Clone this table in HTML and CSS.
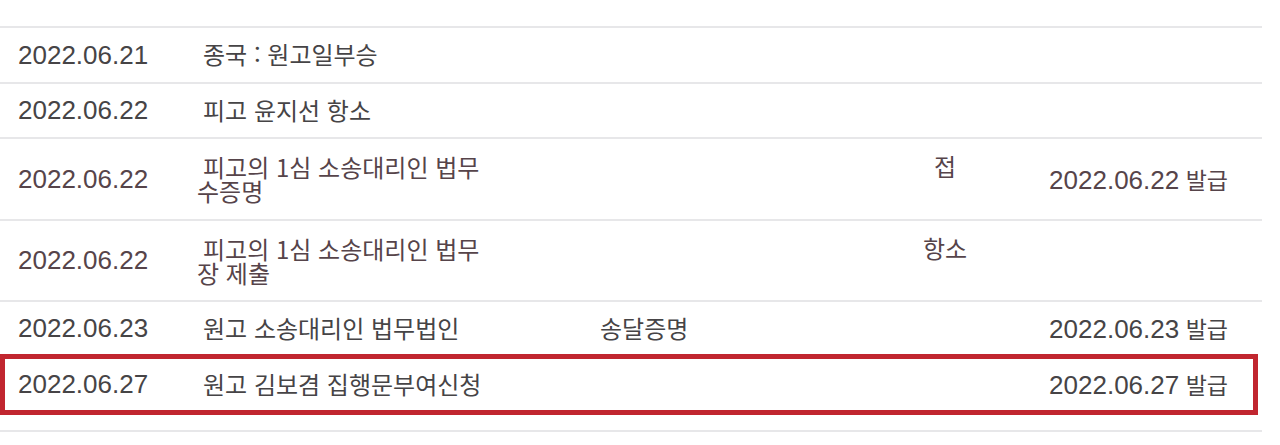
FILE: index.html
```html
<!DOCTYPE html>
<html lang="ko">
<head>
<meta charset="utf-8">
<title>사건진행내역</title>
<link rel="stylesheet" href="styles.css">
</head>
<body>
<div class="list">
  <div class="row h56">
    <div class="date">2022.06.21</div>
    <div class="text">종국 : 원고일부승</div>
  </div>
  <div class="row h55">
    <div class="date">2022.06.22</div>
    <div class="text">피고 윤지선 항소</div>
  </div>
  <div class="row h82 tint">
    <div class="date">2022.06.22</div>
    <div class="text wrap">피고의 1심 소송대리인 법무<br>수증명</div>
    <div class="c4 top">접</div>
    <div class="c5"><span class="num">2022.06.22</span> 발급</div>
  </div>
  <div class="row h81 tint">
    <div class="date">2022.06.22</div>
    <div class="text wrap">피고의 1심 소송대리인 법무<br>장 제출</div>
    <div class="c4 top">항소</div>
  </div>
  <div class="row h55">
    <div class="date">2022.06.23</div>
    <div class="text">원고 소송대리인 법무법인</div>
    <div class="c3">송달증명</div>
    <div class="c5"><span class="num">2022.06.23</span> 발급</div>
  </div>
  <div class="row hl">
    <div class="date">2022.06.27</div>
    <div class="text">원고 김보겸 집행문부여신청</div>
    <div class="c5"><span class="num">2022.06.27</span> 발급</div>
  </div>
  <div class="spacer"></div>
  <div class="row last"></div>
</div>
</body>
</html>
```

FILE: styles.css
```css
html, body {
  margin: 0;
  padding: 0;
  background: #ffffff;
}

body {
  font-family: "Liberation Sans", "Noto Sans CJK KR", sans-serif;
  color: #464446;
}

.list {
  width: 1262px;
  padding-top: 26px;
}

.row {
  display: grid;
  grid-template-columns: 197px 403px 300px 90px 1fr;
  align-items: center;
  border-top: 2px solid #e7e7e9;
  box-sizing: border-box;
}

.h56 { height: 56px; }
.h55 { height: 55px; }
.h82 { height: 82px; }
.h81 { height: 81px; }

.tint { color: #56444a; }

.date {
  grid-column: 1;
  padding-left: 18px;
  font-size: 26px;
}

.text {
  grid-column: 2;
  font-family: "Noto Sans CJK KR", "Liberation Sans", sans-serif;
  font-size: 24px;
  line-height: 24px;
  text-indent: 6px;
  padding-bottom: 2px;
}

.text.wrap {
  line-height: 24px;
  padding-bottom: 0;
}

.c3 {
  grid-column: 3;
  font-family: "Noto Sans CJK KR", sans-serif;
  font-size: 24px;
  line-height: 24px;
  padding-bottom: 2px;
}

.c4 {
  grid-column: 4;
  text-align: center;
  font-family: "Noto Sans CJK KR", sans-serif;
  font-size: 24px;
}

.c4.top {
  align-self: start;
  padding-top: 15px;
  line-height: 24px;
}

.c5 {
  grid-column: 5;
  text-align: right;
  padding-right: 34px;
  font-family: "Noto Sans CJK KR", sans-serif;
  font-size: 23px;
  line-height: 26px;
}

.c5 .num {
  font-family: "Liberation Sans", sans-serif;
  font-size: 26px;
}

.hl {
  height: 61px;
  width: 1258px;
  margin-top: -1px;
  border: 5px solid #c1262f;
  grid-template-columns: 192px 403px 300px 90px 1fr;
}

.hl .date {
  padding-left: 13px;
}

.hl .c5 {
  padding-right: 25px;
}

.spacer {
  height: 15px;
}

.row.last {
  height: 14px;
  border-top: 2px solid #e7e7e9;
}
```
